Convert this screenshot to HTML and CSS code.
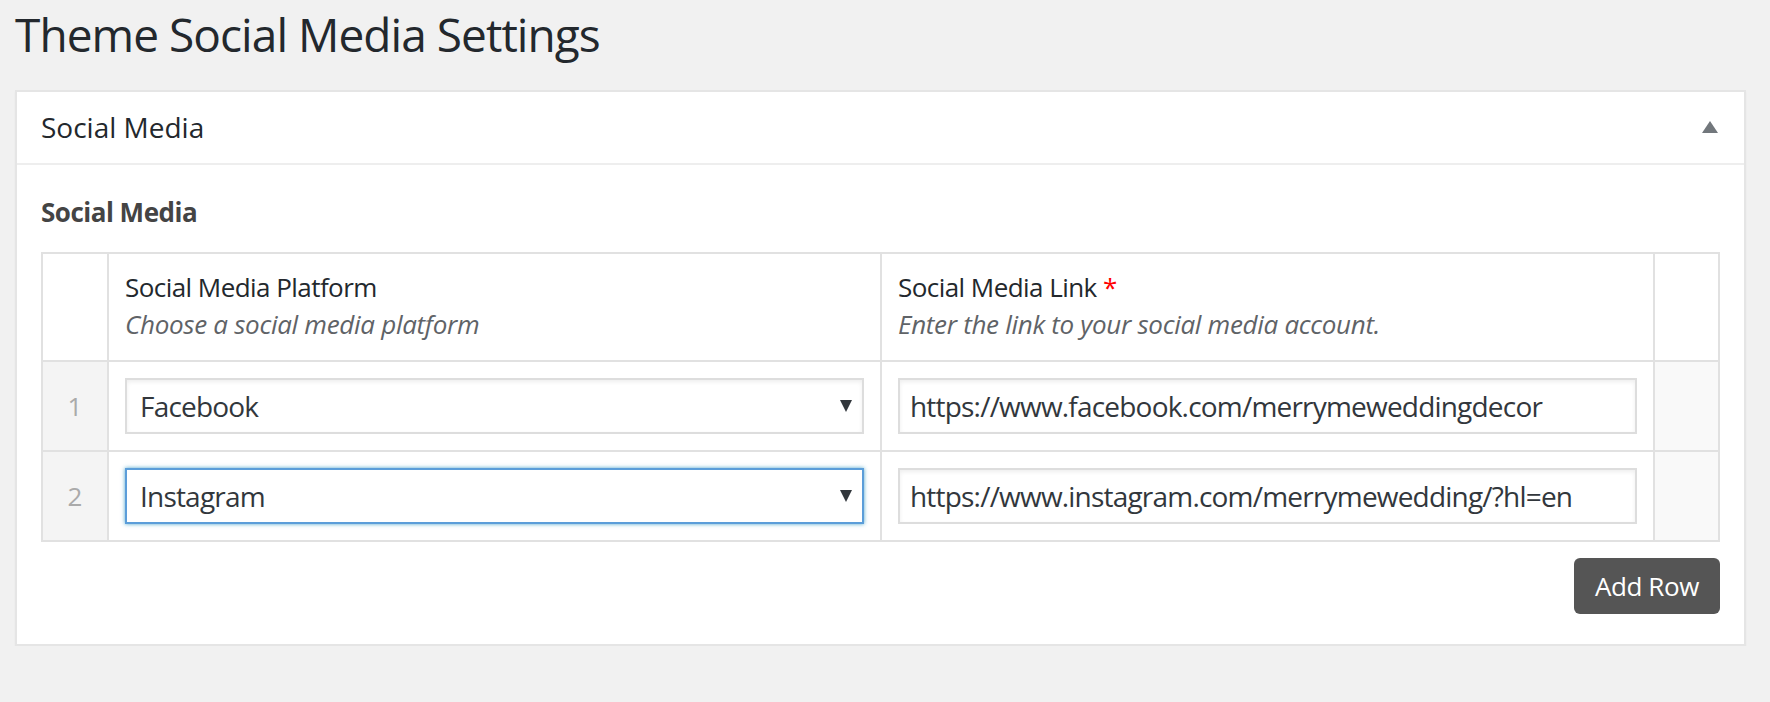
FILE: index.html
```html
<!DOCTYPE html>
<html lang="en">
<head>
    <meta charset="UTF-8">
    <meta name="viewport" content="width=device-width, initial-scale=1.0">
    <title>Theme Social Media Settings</title>
    <link rel="stylesheet" href="styles.css">
</head>
<body>
    <div class="wrap">
        <h1 class="page-title">Theme Social Media Settings</h1>

        <div class="postbox">
            <div class="postbox-header">
                <h2>Social Media</h2>
                <span class="toggle-indicator"></span>
            </div>

            <div class="inside">
                <div class="field-label">Social Media</div>

                <table class="repeater">
                    <thead>
                        <tr>
                            <th class="order"></th>
                            <th>
                                <div class="col-label">Social Media Platform</div>
                                <div class="description">Choose a social media platform</div>
                            </th>
                            <th>
                                <div class="col-label">Social Media Link <span class="required">*</span></div>
                                <div class="description">Enter the link to your social media account.</div>
                            </th>
                            <th class="remove"></th>
                        </tr>
                    </thead>
                    <tbody>
                        <tr>
                            <td class="order">1</td>
                            <td>
                                <div class="select">
                                    <span>Facebook</span>
                                    <span class="arrow"></span>
                                </div>
                            </td>
                            <td><input class="text-input" type="text" value="https://www.facebook.com/merrymeweddingdecor"></td>
                            <td class="remove"></td>
                        </tr>
                        <tr>
                            <td class="order">2</td>
                            <td>
                                <div class="select focused">
                                    <span>Instagram</span>
                                    <span class="arrow"></span>
                                </div>
                            </td>
                            <td><input class="text-input" type="text" value="https://www.instagram.com/merrymewedding/?hl=en"></td>
                            <td class="remove"></td>
                        </tr>
                    </tbody>
                </table>

                <div class="actions">
                    <button class="add-row">Add Row</button>
                </div>
            </div>
        </div>
    </div>
</body>
</html>
```

FILE: styles.css
```css
body {
    margin: 0;
    padding: 0;
    background-color: #f1f1f1;
    font-family: 'Open Sans', 'Noto Sans', sans-serif;
    color: #23282d;
}
.wrap {
    padding: 0 24px 0 15px;
}
.page-title {
    margin: 0 0 26px 0;
    padding: 4px 0 0 0;
    font-size: 46px;
    font-weight: 400;
    line-height: 60px;
    letter-spacing: -0.95px;
    color: #23282d;
}
.postbox {
    background-color: #fff;
    border: 2px solid #e5e5e5;
    box-shadow: 0 2px 2px rgba(0, 0, 0, 0.04);
}
.postbox-header {
    display: flex;
    align-items: center;
    justify-content: space-between;
    padding: 15px 26px 16px 24px;
    border-bottom: 2px solid #eee;
}
.postbox-header h2 {
    margin: 0;
    font-size: 28px;
    font-weight: 400;
    line-height: 40px;
}
.toggle-indicator {
    width: 0;
    height: 0;
    border-left: 8px solid transparent;
    border-right: 8px solid transparent;
    border-bottom: 12px solid #72777c;
}
.inside {
    padding: 29px 24px 30px 24px;
}
.field-label {
    font-size: 26px;
    font-weight: 700;
    line-height: 36px;
    letter-spacing: -0.5px;
    color: #444;
    margin-bottom: 22px;
}
.repeater {
    width: 100%;
    table-layout: fixed;
    border-collapse: separate;
    border-spacing: 0;
    border-top: 2px solid #e1e1e1;
    border-left: 2px solid #e1e1e1;
}
.repeater th,
.repeater td {
    box-sizing: border-box;
    border-right: 2px solid #e1e1e1;
    border-bottom: 2px solid #e1e1e1;
    padding: 16px;
    text-align: left;
}
.repeater th {
    padding-top: 15px;
    padding-bottom: 17px;
    vertical-align: top;
    font-weight: 400;
}
.repeater .order {
    width: 66px;
    padding: 0;
    text-align: center;
    vertical-align: middle;
    font-size: 26px;
    color: #aaa;
}
.repeater .remove {
    width: 65px;
    padding: 0;
}
.repeater tbody .order {
    background-color: #f4f4f4;
}
.repeater tbody .remove {
    background-color: #f9f9f9;
}
.col-label {
    font-size: 26px;
    line-height: 36px;
    letter-spacing: -0.55px;
    color: #23282d;
}
.required {
    color: #f00;
}
.description {
    font-size: 26px;
    line-height: 38px;
    letter-spacing: -0.3px;
    font-style: italic;
    color: #5f6367;
}
.select {
    display: flex;
    align-items: center;
    justify-content: space-between;
    box-sizing: border-box;
    height: 56px;
    padding: 0 10px 0 13px;
    border: 2px solid #ddd;
    box-shadow: inset 0 2px 4px rgba(0, 0, 0, 0.07);
    font-size: 28px;
    letter-spacing: -0.8px;
    color: #32373c;
}
.select.focused {
    border-color: #5b9dd9;
    box-shadow: 0 0 4px rgba(30, 140, 190, 0.8);
}
.arrow {
    width: 0;
    height: 0;
    border-left: 6px solid transparent;
    border-right: 6px solid transparent;
    border-top: 12px solid #32373c;
}
.text-input {
    display: block;
    box-sizing: border-box;
    width: 100%;
    height: 56px;
    margin: 0;
    padding: 0 10px;
    border: 2px solid #ddd;
    box-shadow: inset 0 2px 4px rgba(0, 0, 0, 0.07);
    font-family: 'Open Sans', 'Noto Sans', sans-serif;
    font-size: 28px;
    letter-spacing: -0.8px;
    color: #32373c;
    outline: none;
}
.actions {
    display: flex;
    justify-content: flex-end;
    margin-top: 16px;
}
.add-row {
    height: 56px;
    padding: 0 21px;
    border: none;
    border-radius: 6px;
    background-color: #555;
    color: #fff;
    font-family: 'Open Sans', 'Noto Sans', sans-serif;
    font-size: 26px;
    letter-spacing: -0.4px;
    cursor: pointer;
}
```
